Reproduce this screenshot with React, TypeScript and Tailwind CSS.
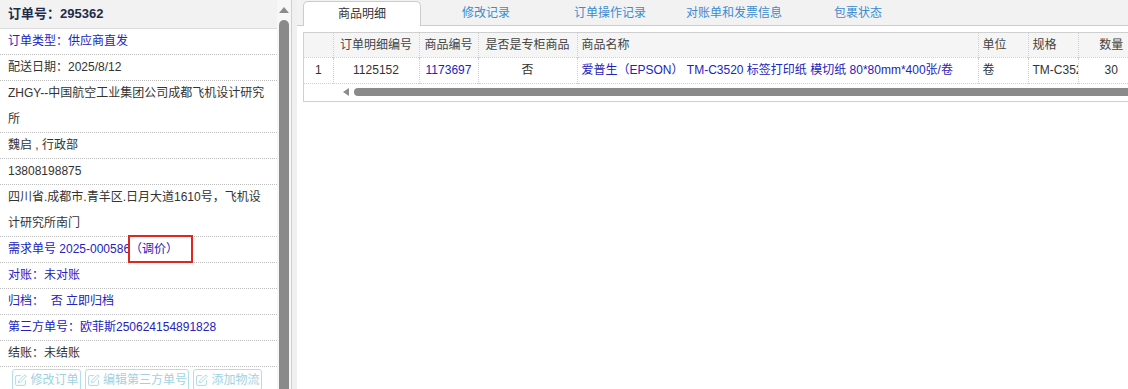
import { SquarePen } from 'lucide-react';

const rows: { text: React.ReactNode; blue?: boolean; lines?: number }[] = [
  { text: '订单类型：供应商直发', blue: true },
  { text: '配送日期：2025/8/12' },
  { text: 'ZHGY--中国航空工业集团公司成都飞机设计研究所', lines: 2 },
  { text: '魏启 , 行政部' },
  { text: '13808198875' },
  { text: '四川省.成都市.青羊区.日月大道1610号，飞机设计研究所南门', lines: 2 },
];

const tabs = ['商品明细', '修改记录', '订单操作记录', '对账单和发票信息', '包裹状态'];

function InfoRow({ children, blue, double }: { children: React.ReactNode; blue?: boolean; double?: boolean }) {
  return (
    <div
      className={`relative border-b border-dotted border-[#bdbdbd] px-2 ${
        double ? 'leading-[25.5px]' : 'leading-[25px]'
      } ${blue ? 'text-[#2323bd]' : 'text-[#333]'}`}
    >
      {children}
    </div>
  );
}

function ActionButton({ label, width }: { label: string; width: string }) {
  return (
    <button
      className={`flex h-[22px] shrink-0 items-center justify-center gap-[3px] whitespace-nowrap rounded-[3px] border border-[#b3dde8] bg-white text-[12px] text-[#9fd2df] ${width}`}
    >
      <SquarePen size={13} strokeWidth={1.6} className="shrink-0" />
      {label}
    </button>
  );
}

export default function App() {
  return (
    <div className="flex h-[389px] w-[1128px] overflow-hidden bg-white font-['Liberation_Sans','Noto_Sans_CJK_SC',sans-serif] text-[12px]">
      {/* left: order info */}
      <div className="flex w-[291px] shrink-0">
        <div className="w-[277px] shrink-0">
          <div className="flex h-[29px] items-center border-b border-[#dcdcdc] bg-[#f2f2f2] px-2 text-[13px] font-bold text-[#1f2b4a]">
            订单号：295362
          </div>
          {rows.map((r, i) => (
            <InfoRow key={i} blue={r.blue} double={r.lines === 2}>
              {r.text}
            </InfoRow>
          ))}
          <InfoRow blue>
            需求单号 2025-000586（调价）
            <span className="absolute left-[128px] top-[-2px] h-[28px] w-[65px] border-2 border-[#e0261e]" />
          </InfoRow>
          <InfoRow blue>对账：未对账</InfoRow>
          <InfoRow blue>归档：&nbsp;&nbsp;否 立即归档</InfoRow>
          <InfoRow blue>第三方单号：欧菲斯250624154891828</InfoRow>
          <InfoRow>结账：未结账</InfoRow>
          <div className="flex gap-[4px] pl-[12px] pt-[2px]">
            <ActionButton label="修改订单" width="w-[69px]" />
            <ActionButton label="编辑第三方单号" width="w-[104px]" />
            <ActionButton label="添加物流" width="w-[69px]" />
          </div>
        </div>
        <div className="flex w-[14px] flex-col items-center bg-[#f7f7f7]">
          <div className="mt-[7px] h-0 w-0 border-x-[5px] border-b-[6px] border-x-transparent border-b-[#8c8c8c]" />
          <div className="mt-[7px] w-[10px] flex-1 rounded-t-full bg-[#8a8a8a]" />
        </div>
      </div>
      <div className="w-[6px] shrink-0 border-l border-[#cfcfcf] bg-[#f0f0f0]" />

      {/* right: tabs + table */}
      <div className="flex min-w-0 flex-1 flex-col">
        <div className="flex h-[26px] items-end gap-[6px] border-b border-[#cccccc] bg-[#f2f2f2] pl-[6px]">
          {tabs.map((t, i) => (
            <div
              key={t}
              className={`flex h-[25px] w-[118px] items-center justify-center text-[12px] ${
                i === 0
                  ? 'relative top-[1px] rounded-t-[5px] border border-b-0 border-[#cccccc] bg-white text-[#333]'
                  : 'text-[#3a8ccf]'
              }`}
            >
              {t}
            </div>
          ))}
        </div>
        <div className="pl-[6px] pt-[6px]">
          <div className="overflow-hidden border border-r-0 border-[#cfcfcf]">
            <table className="w-[840px] table-fixed border-collapse text-[12px]">
              <colgroup>
                <col className="w-[29px]" />
                <col className="w-[86px]" />
                <col className="w-[59px]" />
                <col className="w-[99px]" />
                <col className="w-[401px]" />
                <col className="w-[50px]" />
                <col className="w-[50px]" />
                <col className="w-[66px]" />
              </colgroup>
              <thead>
                <tr className="h-[24px] bg-[#f5f5f5] text-[#444]">
                  <th className="border-r border-dotted border-[#cfcfcf] font-normal" />
                  <th className="border-r border-dotted border-[#cfcfcf] font-normal">订单明细编号</th>
                  <th className="border-r border-dotted border-[#cfcfcf] font-normal">商品编号</th>
                  <th className="border-r border-dotted border-[#cfcfcf] font-normal">是否是专柜商品</th>
                  <th className="border-r border-dotted border-[#cfcfcf] px-[4px] text-left font-normal">商品名称</th>
                  <th className="border-r border-dotted border-[#cfcfcf] px-[4px] text-left font-normal">单位</th>
                  <th className="border-r border-dotted border-[#cfcfcf] px-[4px] text-left font-normal">规格</th>
                  <th className="font-normal">数量</th>
                </tr>
              </thead>
              <tbody>
                <tr className="h-[26px] border-y border-dotted border-[#cfcfcf] text-[#333]">
                  <td className="border-r border-dotted border-[#cfcfcf] text-center">1</td>
                  <td className="border-r border-dotted border-[#cfcfcf] text-center">1125152</td>
                  <td className="border-r border-dotted border-[#cfcfcf] text-center text-[#2323bd]">1173697</td>
                  <td className="border-r border-dotted border-[#cfcfcf] text-center">否</td>
                  <td className="overflow-hidden whitespace-nowrap border-r border-dotted border-[#cfcfcf] px-[4px] text-[#2323bd]">
                    爱普生（EPSON） TM-C3520 标签打印纸 模切纸 80*80mm*400张/卷
                  </td>
                  <td className="border-r border-dotted border-[#cfcfcf] px-[4px]">卷</td>
                  <td className="overflow-hidden whitespace-nowrap border-r border-dotted border-[#cfcfcf] px-[4px]">
                    TM-C3520
                  </td>
                  <td className="text-center">30</td>
                </tr>
              </tbody>
            </table>
            <div className="flex h-[17px] items-center bg-white pl-[39px]">
              <div className="h-0 w-0 border-y-[4px] border-r-[6px] border-y-transparent border-r-[#8c8c8c]" />
              <div className="ml-[5px] h-[8px] flex-1 rounded-l-full bg-[#8a8a8a]" />
            </div>
          </div>
        </div>
      </div>
    </div>
  );
}
